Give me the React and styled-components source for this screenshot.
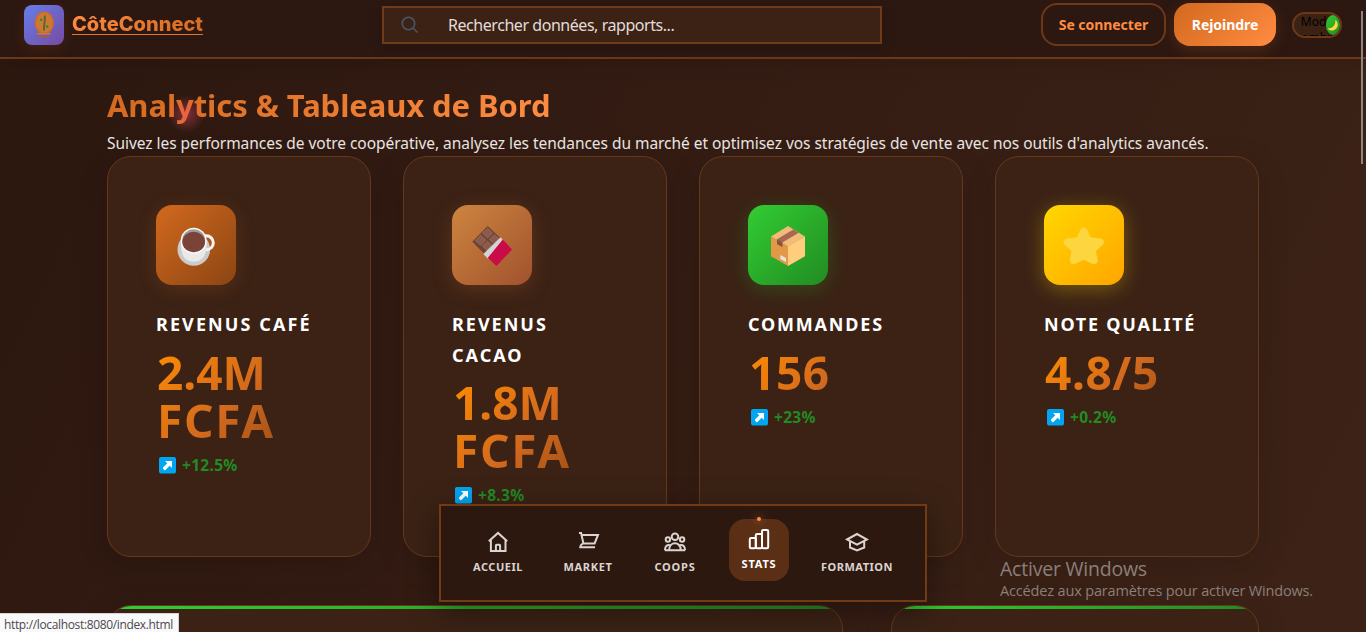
import React from 'react';
import styled, { createGlobalStyle } from 'styled-components';

const sans = '"Noto Sans", "Open Sans", sans-serif';

const GlobalStyle = createGlobalStyle`
  * { box-sizing: border-box; }
  body { margin: 0; font-family: ${sans}; color: #fff; background: #2d1810; overflow: hidden; }
  h1, h2, p { margin: 0; }
`;

const Page = styled.div`
  position: relative;
  height: 632px;
  overflow: hidden;
  background: linear-gradient(115deg, #2d1810 8%, #341c13 45%, #3d2317 100%);
`;

/* ---------- Header ---------- */
const Header = styled.header`
  display: grid;
  grid-template-columns: 358px 500px 1fr;
  align-items: center;
  height: 59px;
  padding: 0 24px 7px;
  background: #2c1711;
  border-bottom: 2px solid #6d3818;
  box-shadow: 0 4px 20px rgba(0, 0, 0, 0.14);
`;

const Brand = styled.a`
  display: flex;
  align-items: center;
  gap: 8px;
  text-decoration: none;
`;

const LogoBox = styled.span`
  width: 40px;
  height: 40px;
  border-radius: 8px;
  background: linear-gradient(135deg, #667eea, #764ba2);
  box-shadow: 0 4px 16px rgba(210, 105, 30, 0.14);
`;

const BrandUnderline = styled.span`
  height: 23px;
  margin-bottom: 3px;
  border-bottom: 1px solid #e2762b;
`;

const BrandName = styled.span`
  display: block;
  font: 800 20px/24px Inter, sans-serif;
  background: linear-gradient(135deg, #ff8c42, #d2691e);
  background-clip: text;
  -webkit-background-clip: text;
  color: transparent;
`;

const Search = styled.label`
  display: flex;
  align-items: center;
  height: 38px;
  padding-left: 15px;
  background: #3b2215;
  border: 2px solid #723b17;
  box-shadow: 0 4px 16px rgba(0, 0, 0, 0.12);
  svg { flex: none; }
`;

const SearchInput = styled.input`
  flex: 1;
  margin-left: 27px;
  padding: 0;
  border: 0;
  outline: 0;
  background: none;
  font: 16px ${sans};
  letter-spacing: -0.45px;
  &::placeholder { color: #e2dcd9; opacity: 1; }
`;

const Actions = styled.div`
  display: flex;
  align-items: center;
  justify-content: flex-end;
  gap: 8px;
`;

const Button = styled.button`
  width: ${(p) => (p.$primary ? 102 : 125)}px;
  height: 43px;
  margin-bottom: 1px;
  padding: 0;
  border-radius: 16px;
  border: ${(p) => (p.$primary ? '0' : '2px solid #6d3818')};
  background: ${(p) => (p.$primary ? 'linear-gradient(135deg, #d2691e, #ff8c42)' : 'transparent')};
  box-shadow: ${(p) => (p.$primary ? '0 4px 16px rgba(210, 105, 30, 0.22)' : 'none')};
  color: ${(p) => (p.$primary ? '#fff' : '#ff8c42')};
  font: 700 14px ${sans};
  letter-spacing: -0.05px;
`;

const Toggle = styled.button`
  position: relative;
  width: 50px;
  height: 26px;
  margin-left: 8px;
  padding: 0;
  overflow: hidden;
  border: 2px solid #6d3818;
  border-radius: 13px;
  background: #3b2215;
  color: #000;
`;

const ToggleText = styled.span`
  display: block;
  height: 22px;
  overflow: hidden;
  text-align: center;
  font: 12px/16px ${sans};
`;

const Knob = styled.span`
  position: absolute;
  right: 0;
  top: 1px;
  display: grid;
  place-items: center;
  width: 14px;
  height: 20px;
  border-radius: 50%;
  background: linear-gradient(135deg, #32cd32, #228b22);
`;

/* ---------- Dashboard ---------- */
const Main = styled.main`
  width: 1152px;
  margin: 0 auto;
  padding-top: 27px;
`;

const Title = styled.h1`
  width: fit-content;
  font: 700 31px/38px ${sans};
  letter-spacing: -0.08px;
  white-space: nowrap;
  background: linear-gradient(135deg, #d2691e, #ff8c42);
  background-clip: text;
  -webkit-background-clip: text;
  color: transparent;
`;

const Intro = styled.p`
  margin: 6px 0 -1px;
  font-size: 15.5px;
  line-height: 27px;
  letter-spacing: -0.04px;
  white-space: nowrap;
  color: #ece6e2;
`;

const Stats = styled.section`
  display: grid;
  grid-template-columns: repeat(4, 264px);
  gap: 32px;
`;

const Panel = styled.article`
  background: #3b2215;
  border: 1px solid #67371a;
  border-radius: 24px;
  box-shadow: 0 8px 32px rgba(0, 0, 0, 0.14);
`;

const StatCard = styled(Panel)`
  height: 401px;
  padding: 48px;
`;

const Tile = styled.div`
  display: grid;
  place-items: center;
  width: 80px;
  height: 80px;
  margin-bottom: 24px;
  border-radius: 16px;
  background: linear-gradient(135deg, ${(p) => p.$from}, ${(p) => p.$to});
  box-shadow: 0 4px 20px ${(p) => p.$glow};
  svg { overflow: visible; }
`;

const StatName = styled.h2`
  font: 700 18px/30.6px ${sans};
  letter-spacing: ${(p) => p.$tracking}px;
`;

const StatValue = styled.p`
  margin-top: 8px;
  padding-left: 1px;
  font: 700 46px/48px ${sans};
  background: linear-gradient(135deg, #ff8c00 0%, #d2691e 50%, #8b4513 100%);
  background-clip: text;
  -webkit-background-clip: text;
  color: transparent;
`;

const ValueLine = styled.span`
  display: block;
  letter-spacing: ${(p) => p.$tracking}px;
`;

const Change = styled.p`
  display: flex;
  align-items: center;
  gap: 6px;
  margin-top: 8px;
  padding-left: 3px;
  font: 700 15.5px/26px ${sans};
  letter-spacing: 0.3px;
  color: #228b22;
  svg { position: relative; top: 0.5px; }
`;

const Charts = styled.section`
  display: grid;
  grid-template-columns: 736px 368px;
  gap: 48px;
  margin-top: 48px;
`;

const ChartCard = styled(Panel)`
  height: 320px;
  overflow: hidden;
  &::before {
    content: '';
    display: block;
    height: 3px;
    background: linear-gradient(90deg, #32cd32, #228b22);
  }
`;

/* ---------- Floating layers ---------- */
const NavBar = styled.nav`
  position: absolute;
  left: 439px;
  top: 504px;
  display: grid;
  grid-template-columns: 90px 90px 84px 84px 112px;
  align-items: center;
  width: 488px;
  height: 98px;
  padding: 0 12px;
  background: #2d1810;
  border: 2px solid #723b17;
  box-shadow: 0 8px 32px rgba(0, 0, 0, 0.4);
`;

const NavItem = styled.a`
  position: relative;
  top: ${(p) => (p.$active ? '-3px' : '0')};
  display: flex;
  flex-direction: column;
  align-items: center;
  justify-self: center;
  min-width: 60px;
  height: 62px;
  padding-top: 8px;
  border-radius: 16px;
  background: ${(p) => (p.$active ? '#5a2f16' : 'transparent')};
  color: ${(p) => (p.$active ? '#fff' : '#dbd4d0')};
`;

const NavLabel = styled.span`
  margin-top: 5px;
  font: 700 11px/16px ${sans};
  letter-spacing: ${(p) => p.$tracking}px;
`;

const ActiveDot = styled.i`
  position: absolute;
  top: -2px;
  left: 28px;
  width: 4px;
  height: 4px;
  border-radius: 50%;
  background: #ff8c42;
  box-shadow: 0 0 8px #ff8c42;
`;

const Watermark = styled.aside`
  position: absolute;
  left: 1000px;
  top: 555px;
  white-space: nowrap;
  font: 14.5px/18px "Open Sans", sans-serif;
  letter-spacing: -0.16px;
  color: #8b7f7a;
  strong { display: block; font-weight: 400; font-size: 19.5px; line-height: 27px; letter-spacing: -0.22px; }
`;

const LinkPreview = styled.div`
  position: absolute;
  left: 0;
  bottom: 0;
  width: 179px;
  height: 19px;
  padding-left: 4px;
  border: 1px solid #d5d5d5;
  border-width: 1px 1px 0 0;
  background: #f9f9fa;
  color: #4a4a4f;
  font: 12px/22px "Open Sans", sans-serif;
  letter-spacing: -0.35px;
  white-space: nowrap;
`;

const ScrollThumb = styled.div`
  position: absolute;
  right: 3px;
  top: 11px;
  width: 2px;
  height: 153px;
  background: #8b8480;
`;

const Glow = styled.div`
  position: absolute;
  left: 167px;
  top: 95px;
  width: 38px;
  height: 38px;
  border-radius: 50%;
  background: radial-gradient(circle, rgba(255, 80, 110, 0.42), rgba(255, 80, 110, 0) 70%);
`;

/* ---------- Drawings ---------- */
const BeanLogo = () => (
  <svg width="40" height="40" viewBox="0 0 40 40">
    <ellipse cx="20.3" cy="17.8" rx="9" ry="10.6" fill="#c97a36" stroke="#d2691e" strokeWidth="1.4" />
    <path d="M20.8 10.500c.6 5-1 9-.8 15" stroke="#66602f" strokeWidth="1.900" fill="none" />
    <circle cx="17.300" cy="14.800" r="1.300" fill="#2f8b22" />
    <circle cx="23.200" cy="21.500" r="1.300" fill="#2f8b22" />
    <path d="M13 28.800h13.500" stroke="#d2763a" strokeWidth="1.600" />
    <path d="M13.500 31.200l11.500.9" stroke="#a45d42" strokeWidth="1.500" />
  </svg>
);

const Cup = () => (
  <svg width="40" height="40" viewBox="0 0 40 40">
    <circle cx="17.800" cy="24.500" r="16.300" fill="#cbcbcb" />
    <circle cx="30.300" cy="17.800" r="7" fill="none" stroke="#f4f4f4" strokeWidth="3" />
    <path d="M5 16C4 30 9 36.700 17.700 36.700S31.500 30 30.400 16z" fill="#e9e9e9" />
    <circle cx="17.700" cy="15.700" r="13" fill="#fafafa" />
    <circle cx="17.700" cy="15.700" r="11.500" fill="#9c9c9c" />
    <ellipse cx="17.700" cy="17" rx="11.300" ry="10.200" fill="#7b4337" />
  </svg>
);

const Chocolate = () => (
  <svg width="40" height="40" viewBox="0 0 40 40">
    <path d="M.3 16.700L15.700 1 29 13.500 12.500 29z" fill="#6f4438" />
    <g fill="#8b5a4a" stroke="#a0705f" strokeWidth=".7">
      <path d="M15.700 3.200l5 4.800-5 5-5.200-4.800z" />
      <path d="M8.700 10.200l5.200 4.800-5.300 5.200-5.200-4.600z" />
      <path d="M22.500 9.800l4.500 4-5 4.800-4.700-4.200z" />
      <path d="M15.400 16.400l4.800 4-5 5-4.900-4.500z" />
    </g>
    <path d="M28.500 12.200L31.500 15.500 16 33.700 11.300 29z" fill="#d3d3d3" />
    <path d="M30.800 14.600L40 24.500 24.500 41 15.800 32.800z" fill="#c90b49" />
  </svg>
);

const Parcel = () => (
  <svg width="40" height="40" viewBox="0 0 40 40">
    <path d="M20 1L37 11.500 20 21.500 3 11.500z" fill="#f2bb77" />
    <path d="M3 11.500l17 9.800V41L3 31.300z" fill="#e39848" />
    <path d="M37 11.500l-17 9.800V41l17-9.700z" fill="#ffcd7b" />
    <path d="M25.300 4.500L30.700 7.700 14.300 17.500V22L9 19v-4.800z" fill="#a66852" />
    <path d="M9 14.200l5.300 3.300V22L9 19z" fill="#8d523f" />
    <path d="M12.300 30l5.700 3v4l-5.700-3z" fill="#e4e4e4" />
  </svg>
);

const Star = () => (
  <svg width="40" height="40" viewBox="0 0 40 40">
    <path
      d="M19.700 6.500l4.500 9.300 11.800 1.500-8.200 7.500 2 10.500-10.100-4.800-10.100 4.800 2-10.500-8.200-7.500 11.800-1.500z"
      fill="#fdd53f" stroke="#fdd53f" strokeWidth="7.600" strokeLinejoin="round"
    />
  </svg>
);

const TrendUp = () => (
  <svg width="17" height="17" viewBox="0 0 17 17">
    <rect width="17" height="16.500" rx="2" fill="#00a6f2" />
    <path d="M6 4h7v7l-2.300-2.300-4 4a1.200 1.200 0 0 1-1.700 0l-.7-.7a1.200 1.200 0 0 1 0-1.700l4-4z" fill="#fff" />
  </svg>
);

const Moon = () => (
  <svg width="12" height="12" viewBox="0 0 12 12">
    <path d="M8.200.8C12.200 4 11.500 10 6 11.400 3.500 11.900 1.500 11 .9 9.300 5.500 9.700 9 6 8.200.8z" fill="#ffd93b" />
  </svg>
);

const SearchIcon = () => (
  <svg width="22" height="22" viewBox="0 0 22 22" fill="none" stroke="#4a5568" strokeWidth="1.600">
    <circle cx="9.500" cy="9.500" r="6.200" />
    <path d="M14 14l4.500 4.500" />
  </svg>
);

const glyphs = {
  home: <path d="M2.800 11.300L12 2.900l9.200 8.400M4.900 9.700V21h14.600V9.700M9.900 21v-5.500q0-.8.8-.8h2.600q.8 0 .8.8V21" />,
  cart: <path d="M3 3h2.100l2.300 10.400H18.600L22 4.900H5.600M7.400 13.400Q4.600 14.200 4.300 17.200H19" />,
  group: (
    <>
      <circle cx="12" cy="6.700" r="3.300" />
      <circle cx="4.900" cy="9.500" r="2.200" />
      <circle cx="19.100" cy="9.500" r="2.200" />
      <path d="M1.900 20.200h20.200M6.200 20.200c0-9.200 11.600-9.200 11.600 0M1.900 20.200c0-3.900 2-5.800 5.300-5M22.100 20.200c0-3.900-2-5.800-5.300-5" />
    </>
  ),
  bars: (
    <>
      <rect x="2.800" y="11" width="6" height="10.300" rx="1.300" />
      <rect x="8.800" y="7" width="6.200" height="14.300" rx="1.300" />
      <rect x="15" y="3" width="6.200" height="18.300" rx="1.300" />
    </>
  ),
  cap: <path d="M2 9.500L12 4l10 5.500-10 5.200zM5 11.200v6.300l7 3 7.200-3v-6.300" />,
};

const NavIcon = ({ name }) => (
  <svg width="24" height="24" viewBox="0 0 24 24" fill="none" stroke="currentColor" strokeWidth="2">
    {glyphs[name]}
  </svg>
);

/* ---------- Data ---------- */
const stats = [
  { name: 'REVENUS CAFÉ', tracking: 2.1, value: [['2.4M', 0], ['FCFA', 1.7]], change: '+12.5%', Icon: Cup, from: '#d2691e', to: '#8b4513', glow: 'rgba(210,105,30,.2)' },
  { name: 'REVENUS CACAO', tracking: 2, value: [['1.8M', 0], ['FCFA', 1.7]], change: '+8.3%', Icon: Chocolate, from: '#cd853f', to: '#a0522d', glow: 'rgba(205,105,50,.25)' },
  { name: 'COMMANDES', tracking: 1.8, value: [['156', 0.6]], change: '+23%', Icon: Parcel, from: '#32cd32', to: '#228b22', glow: 'rgba(50,205,50,.22)' },
  { name: 'NOTE QUALITÉ', tracking: 1.75, value: [['4.8/5', 0.6]], change: '+0.2%', Icon: Star, from: '#ffd700', to: '#ffa500', glow: 'rgba(255,215,0,.32)' },
];

const navItems = [
  { label: 'ACCUEIL', icon: 'home', tracking: 0.55 },
  { label: 'MARKET', icon: 'cart', tracking: 0.67 },
  { label: 'COOPS', icon: 'group', tracking: 0.77 },
  { label: 'STATS', icon: 'bars', tracking: 0.82, active: true },
  { label: 'FORMATION', icon: 'cap', tracking: 0.51 },
];

export default function App() {
  return (
    <Page>
      <GlobalStyle />
      <Header>
        <Brand>
          <LogoBox><BeanLogo /></LogoBox>
          <BrandUnderline><BrandName>CôteConnect</BrandName></BrandUnderline>
        </Brand>
        <Search>
          <SearchIcon />
          <SearchInput placeholder="Rechercher données, rapports..." />
        </Search>
        <Actions>
          <Button>Se connecter</Button>
          <Button $primary>Rejoindre</Button>
          <Toggle>
            <ToggleText>Mode sombre</ToggleText>
            <Knob><Moon /></Knob>
          </Toggle>
        </Actions>
      </Header>

      <Main>
        <Title>Analytics &amp; Tableaux de Bord</Title>
        <Intro>
          Suivez les performances de votre coopérative, analysez les tendances du marché et optimisez vos
          stratégies de vente avec nos outils d'analytics avancés.
        </Intro>
        <Stats>
          {stats.map(({ name, tracking, value, change, Icon, from, to, glow }) => (
            <StatCard key={name}>
              <Tile $from={from} $to={to} $glow={glow}><Icon /></Tile>
              <StatName $tracking={tracking}>{name}</StatName>
              <StatValue>
                {value.map(([text, gap]) => <ValueLine key={text} $tracking={gap}>{text}</ValueLine>)}
              </StatValue>
              <Change><TrendUp />{change}</Change>
            </StatCard>
          ))}
        </Stats>
        <Charts>
          <ChartCard />
          <ChartCard />
        </Charts>
      </Main>

      <Glow />
      <NavBar>
        {navItems.map(({ label, icon, tracking, active }) => (
          <NavItem key={label} $active={active}>
            {active && <ActiveDot />}
            <NavIcon name={icon} />
            <NavLabel $tracking={tracking}>{label}</NavLabel>
          </NavItem>
        ))}
      </NavBar>
      <Watermark>
        <strong>Activer Windows</strong>
        Accédez aux paramètres pour activer Windows.
      </Watermark>
      <LinkPreview>http://localhost:8080/index.html</LinkPreview>
      <ScrollThumb />
    </Page>
  );
}
